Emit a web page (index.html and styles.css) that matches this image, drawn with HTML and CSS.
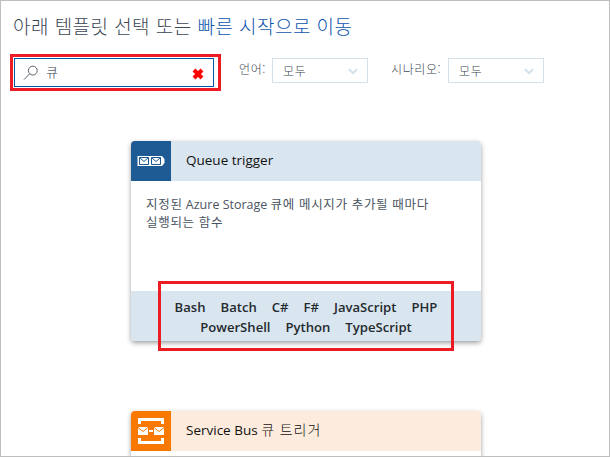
FILE: index.html
```html
<!DOCTYPE html>
<html lang="ko">
<head>
<meta charset="utf-8">
<title>템플릿 선택</title>
<link rel="stylesheet" href="styles.css">
</head>
<body>
<main class="page">
  <h1 class="title"><span class="title-main">아래 템플릿 선택 또는</span> <a class="title-link">빠른 시작으로 이동</a></h1>
  <div class="filters">
    <div class="search-mark">
      <div class="search">
        <svg class="search-icon" width="16" height="16" viewBox="0 0 16 16"><circle cx="9.8" cy="5.6" r="4.4"/><path d="M6.6 8.800 1 14.600"/></svg>
        <span class="query">큐</span>
        <svg class="clear" width="12" height="12" viewBox="0 0 12 12"><path d="M2 2 10 10M10 2 2 10"/></svg>
      </div>
    </div>
    <span class="label label-lang">언어:</span>
    <div class="select"><span>모두</span><svg width="10" height="7" viewBox="0 0 10 7"><path d="M1 1.2 5 5.2 9 1.2"/></svg></div>
    <span class="label label-scenario">시나리오:</span>
    <div class="select"><span>모두</span><svg width="10" height="7" viewBox="0 0 10 7"><path d="M1 1.2 5 5.2 9 1.2"/></svg></div>
  </div>
  <section class="cards">
    <article class="card">
      <header class="card-head">
        <div class="badge">
          <svg width="40" height="40" viewBox="0 0 40 40">
            <path fill="#fff" d="M6.500 15H31l2.500 3v4L31 25H6.500z"/>
            <path fill="none" stroke="#1e5a94" d="M8.500 16.500h9v7h-9zM8.500 16.500l4.500 4 4.500-4M20.500 16.500h9v7h-9zM20.500 16.500l4.500 4 4.500-4"/>
          </svg>
        </div>
        <span class="card-title">Queue trigger</span>
      </header>
      <p class="card-text"><span class="ko">지정된</span> Azure Storage <span class="ko">큐에 메시지가 추가될 때마다</span><br><span class="ko">실행되는 함수</span></p>
      <footer class="card-foot">
        <div class="langs"><span>Bash</span><span>Batch</span><span>C#</span><span>F#</span><span>JavaScript</span><span>PHP</span></div>
        <div class="langs"><span>PowerShell</span><span>Python</span><span>TypeScript</span></div>
        <div class="lang-mark"></div>
      </footer>
    </article>
    <article class="card card-orange">
      <header class="card-head">
        <div class="badge">
          <svg width="40" height="40" viewBox="0 0 40 40">
            <path fill="#fff" d="M7 7h26v6h-3v-3H10v3H7zM7 33h26v-6h-3v3H10v-3H7zM7 16h10v8H7zM23 16h10v8H23zM18 19h4v2h-4z"/>
            <path fill="none" stroke="#f97800" d="m7 16.500 5 4 5-4M23 16.500l5 4 5-4"/>
          </svg>
        </div>
        <span class="card-title title-bus">Service Bus <span class="title-ko">큐 트리거</span></span>
      </header>
    </article>
  </section>
</main>
</body>
</html>
```
FILE: styles.css
```css
* { box-sizing: border-box; }
body { margin: 0; font-family: "Open Sans", "Noto Sans CJK KR", sans-serif; color: #4b5562; }
.page { width: 610px; height: 457px; overflow: hidden; border: 1px solid #bebebe; background: #fff; }
.title { margin: 12px 0 0 12px; height: 26px; line-height: 26px; font-size: 19px; letter-spacing: .45px; font-weight: 300; font-family: "Noto Sans CJK KR", sans-serif; white-space: nowrap; color: #3b4654; }
.title-link { color: #0c55ac; }
.filters { display: flex; align-items: flex-start; margin: 15px 0 0 9px; height: 37px; font-size: 12px; font-family: "Noto Sans CJK KR", sans-serif; font-weight: 300; color: #3b4654; }
.search-mark { width: 211px; height: 37px; border: 3px solid #ed1c24; padding: 1px; }
.search { display: flex; align-items: center; width: 200px; height: 29px; border: 1px solid #0058ad; padding: 0 9px 0 8px; }
.search-icon { fill: none; stroke: #59626c; margin-right: 7px; }
.query { font-size: 13px; line-height: 20px; margin-top: -2px; }
.clear { margin: 3px 0 0 auto; stroke: #f00; stroke-width: 4; }
.label { line-height: 18px; margin-top: 6px; white-space: nowrap; letter-spacing: .6px; }
.label-lang { width: 33px; margin-left: 18px; }
.label-scenario { width: 57px; margin-left: 23px; }
.select { display: flex; align-items: center; justify-content: space-between; width: 96px; height: 25px; margin-top: 4px; padding: 0 9px 0 10px; border: 1px solid #d5e1e8; letter-spacing: .6px; }
.select svg { fill: none; stroke: #d3e0e8; stroke-width: 2; margin-top: 2px; }
.cards { margin: 50px 0 0 130px; width: 350px; }
.card { height: 200px; margin-bottom: 70px; border-radius: 4px; box-shadow: 0 2px 5px rgba(0,0,0,.38); background: #fff; }
.card-head { display: flex; align-items: center; height: 40px; border-radius: 4px 4px 0 0; background: #d9e6ef; overflow: hidden; }
.badge { width: 40px; height: 40px; background: #1e5a94; }
.badge svg { display: block; }
.card-title { margin: -2px 0 0 15px; font-size: 13.500px; color: #111; white-space: nowrap; }
.title-bus { margin-top: -4px; }
.title-ko { font-weight: 300; font-size: 14px; letter-spacing: 1px; }
.card-text { margin: 0; height: 110px; padding: 15px 0 0 15px; font-size: 12.500px; line-height: 18px; white-space: nowrap; }
.ko { letter-spacing: .7px; }
.card-foot { position: relative; height: 50px; padding-top: 6px; border-radius: 0 0 4px 4px; background: #d9e6ef; color: #252a2f; }
.langs { display: flex; justify-content: center; gap: 15px; height: 20px; line-height: 20px; font-size: 13.100px; font-weight: 600; }
.lang-mark { position: absolute; left: 27px; top: -10px; width: 296px; height: 70px; border: 3px solid #ed1c24; }
.card-orange .card-head { background: #fdebdd; }
.card-orange .badge { background: #f97800; }
```
